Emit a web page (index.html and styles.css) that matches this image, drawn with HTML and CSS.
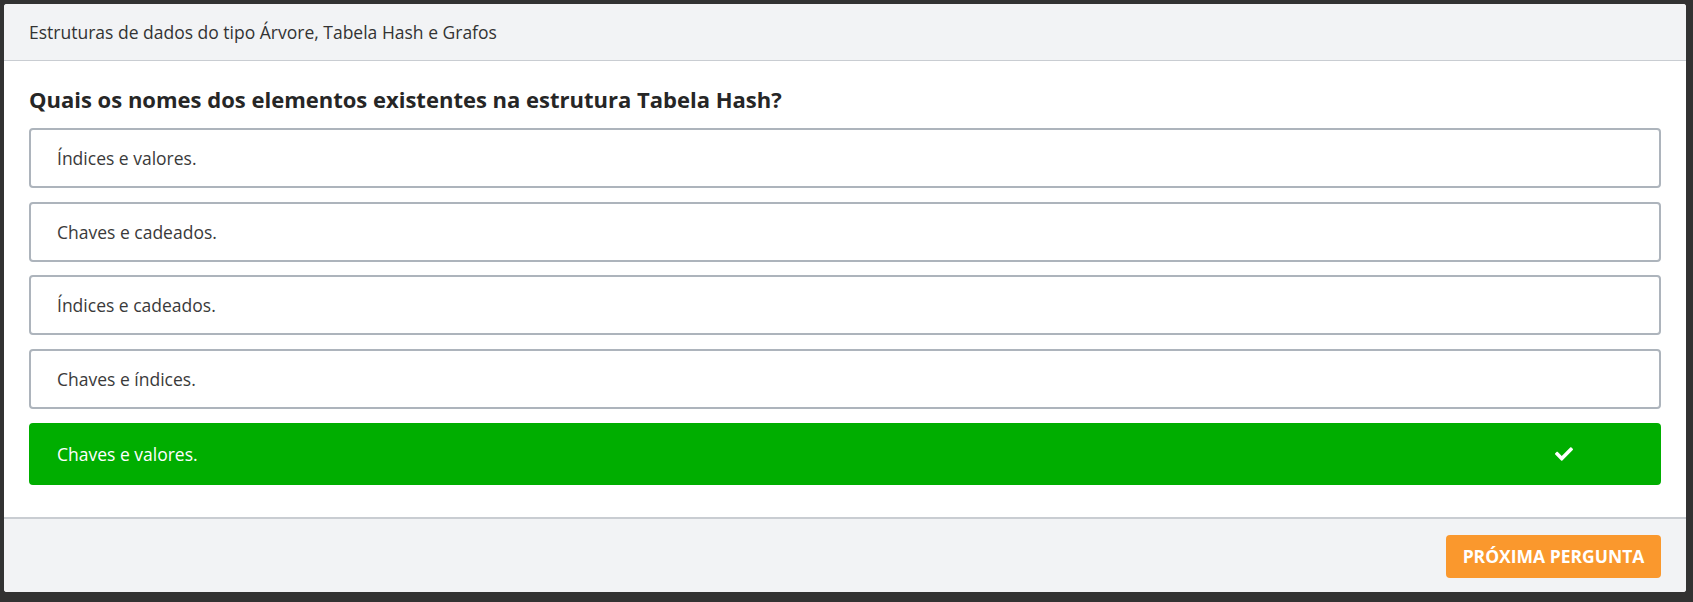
FILE: index.html
```html
<!DOCTYPE html>
<html lang="pt">
<head>
<meta charset="utf-8">
<title>Quiz</title>
<link rel="stylesheet" href="styles.css">
</head>
<body>
<div class="card">
  <div class="card-header">Estruturas de dados do tipo Árvore, Tabela Hash e Grafos</div>
  <div class="card-body">
    <h2 class="question">Quais os nomes dos elementos existentes na estrutura Tabela Hash?</h2>
    <div class="options">
      <div class="option">Índices e valores.</div>
      <div class="option">Chaves e cadeados.</div>
      <div class="option">Índices e cadeados.</div>
      <div class="option">Chaves e índices.</div>
      <div class="option correct"><span>Chaves e valores.</span>
        <svg class="check" viewBox="0 0 512 512" width="18" height="18"><path fill="#fff" d="M173.9 439.4l-166.4-166.4c-10-10-10-26.2 0-36.2l36.2-36.2c10-10 26.2-10 36.2 0L192 312.7 432.1 72.6c10-10 26.2-10 36.2 0l36.2 36.2c10 10 10 26.2 0 36.2l-294.4 294.4c-10 10-26.2 10-36.2 0z"/></svg>
      </div>
    </div>
  </div>
  <div class="card-footer">
    <button class="btn-next">Próxima pergunta</button>
  </div>
</div>
</body>
</html>
```

FILE: styles.css
```css
* { box-sizing: border-box; }
html, body { height: 100%; }
body {
  margin: 0;
  padding: 4px 7px 10px 4px;
  background: #323232;
  font-family: "Open Sans", "Noto Sans", sans-serif;
  color: #333;
}
.card {
  height: 100%;
  background: #fff;
  border-radius: 3px;
  display: flex;
  flex-direction: column;
  overflow: hidden;
}
.card-header {
  height: 57px;
  flex: none;
  background: #f2f3f5;
  border-bottom: 1px solid #c9cdd2;
  padding: 0 25px;
  display: flex;
  align-items: center;
  font-size: 17.5px;
  color: #333;
}
.card-body {
  flex: 1;
  padding: 23px 25px 0 25px;
}
.question {
  margin: 0 0 14px 0;
  font-size: 22px;
  font-weight: 700;
  line-height: 30px;
  color: #262626;
}
.options {
  display: flex;
  flex-direction: column;
  gap: 13.7px;
}
.option {
  height: 60px;
  border: 2px solid #adb4bc;
  border-radius: 4px;
  padding: 0 26px;
  display: flex;
  align-items: center;
  font-size: 17.5px;
  color: #3a3a3a;
}
.option.correct {
  height: 62px;
  background: #00ae00;
  border-color: #00ae00;
  color: #fff;
  justify-content: space-between;
  padding-right: 86px;
}
.check { display: block; }
.card-footer {
  flex: none;
  height: 75px;
  background: #f2f3f5;
  border-top: 2px solid #c9cdd2;
  display: flex;
  justify-content: flex-end;
  align-items: center;
  padding: 0 25px 0 0;
}
.btn-next {
  height: 43px;
  width: 215px;
  background: #fa982d;
  border: none;
  border-radius: 4px;
  color: #fff;
  font-family: "Open Sans", "Noto Sans", sans-serif;
  font-weight: 700;
  font-size: 17.5px;
  text-transform: uppercase;
  padding: 0;
  margin-top: 1px;
}
```
